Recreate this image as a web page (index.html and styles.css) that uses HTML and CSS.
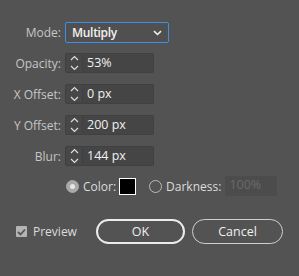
FILE: index.html
```html
<!DOCTYPE html>
<html>
<head>
    <title>Drop Shadow</title>
    <link rel="stylesheet" href="styles.css">
</head>
<body>
    <div class="dialog">
        <div class="form">
            <label class="label">Mode:</label>
            <div class="select">
                <span>Multiply</span>
                <svg width="9" height="6" viewBox="0 0 9 6"><path d="M1 1.2 L4.5 4.5 L8 1.2" fill="none" stroke="#eee" stroke-width="1.6"/></svg>
            </div>

            <label class="label">Opacity:</label>
            <div class="field">
                <div class="stepper">
                    <svg width="9" height="16" viewBox="0 0 9 16"><path d="M1 5 L4.5 1.5 L8 5 M1 11 L4.5 14.5 L8 11" fill="none" stroke="#ddd" stroke-width="1.2"/></svg>
                </div>
                <div class="value">53%</div>
            </div>

            <label class="label">X Offset:</label>
            <div class="field">
                <div class="stepper">
                    <svg width="9" height="16" viewBox="0 0 9 16"><path d="M1 5 L4.5 1.5 L8 5 M1 11 L4.5 14.5 L8 11" fill="none" stroke="#ddd" stroke-width="1.2"/></svg>
                </div>
                <div class="value">0 px</div>
            </div>

            <label class="label">Y Offset:</label>
            <div class="field">
                <div class="stepper">
                    <svg width="9" height="16" viewBox="0 0 9 16"><path d="M1 5 L4.5 1.5 L8 5 M1 11 L4.5 14.5 L8 11" fill="none" stroke="#ddd" stroke-width="1.2"/></svg>
                </div>
                <div class="value">200 px</div>
            </div>

            <label class="label">Blur:</label>
            <div class="field">
                <div class="stepper">
                    <svg width="9" height="16" viewBox="0 0 9 16"><path d="M1 5 L4.5 1.5 L8 5 M1 11 L4.5 14.5 L8 11" fill="none" stroke="#ddd" stroke-width="1.2"/></svg>
                </div>
                <div class="value">144 px</div>
            </div>
        </div>

        <div class="color-row">
            <span class="radio checked"></span>
            <span class="text">Color:</span>
            <span class="swatch"></span>
            <span class="radio"></span>
            <span class="text">Darkness:</span>
            <div class="value disabled">100%</div>
        </div>

        <div class="footer">
            <div class="preview">
                <span class="checkbox">
                    <svg width="9" height="8" viewBox="0 0 9 8"><path d="M1 4 L3.5 6.5 L8 1.5" fill="none" stroke="#555" stroke-width="1.8"/></svg>
                </span>
                <span class="text">Preview</span>
            </div>
            <button class="btn primary">OK</button>
            <button class="btn">Cancel</button>
        </div>
    </div>
</body>
</html>
```

FILE: styles.css
```css
body {
    margin: 0;
    background-color: #535353;
    font-family: 'Open Sans', 'Liberation Sans', sans-serif;
    font-size: 12px;
    color: #d0d0d0;
}

.dialog {
    width: 299px;
    height: 276px;
    box-sizing: border-box;
    padding-top: 22px;
    display: flex;
    flex-direction: column;
}

.form {
    display: grid;
    grid-template-columns: 61px auto;
    column-gap: 4px;
    row-gap: 11px;
    align-items: center;
    justify-items: start;
}

.form .select {
    margin-bottom: -1px;
}

.label {
    justify-self: end;
    color: #c6c6c6;
}

.select {
    width: 104px;
    height: 21px;
    box-sizing: border-box;
    border: 1px solid #3c8ee8;
    border-radius: 2px;
    background-color: #505050;
    display: flex;
    align-items: center;
    justify-content: space-between;
    padding: 0 6px 0 6px;
    color: #f2f2f2;
    font-weight: 600;
    font-size: 12px;
    letter-spacing: -0.3px;
}

.field {
    display: flex;
    height: 20px;
}

.stepper {
    width: 18px;
    height: 20px;
    box-sizing: border-box;
    border: 1px solid #404040;
    border-radius: 2px 0 0 2px;
    background-color: #474747;
    display: flex;
    align-items: center;
    justify-content: center;
}

.value {
    width: 71px;
    height: 20px;
    box-sizing: border-box;
    border: 1px solid #404040;
    border-left: none;
    border-radius: 0 2px 2px 0;
    background-color: #454545;
    color: #f0f0f0;
    padding-left: 4px;
    line-height: 18px;
    font-size: 12.5px;
}

.color-row {
    display: flex;
    align-items: center;
    margin-top: 10px;
    padding-left: 66px;
    height: 20px;
}

.radio {
    width: 13px;
    height: 13px;
    box-sizing: border-box;
    border: 1px solid #bdbdbd;
    border-radius: 50%;
    margin-right: 4px;
}

.radio.checked {
    background-color: #a9a9a9;
    border-color: #a9a9a9;
    position: relative;
}

.radio.checked::after {
    content: '';
    position: absolute;
    left: 3px;
    top: 3px;
    width: 5px;
    height: 5px;
    border-radius: 50%;
    background-color: #e6e6e6;
}

.text {
    color: #dcdcdc;
}

.swatch {
    width: 17px;
    height: 17px;
    box-sizing: border-box;
    border: 1px solid #fff;
    background-color: #000;
    margin-left: 3px;
    margin-right: 13px;
}

.value.disabled {
    width: 52px;
    border: none;
    border-radius: 1px;
    background-color: #4c4c4c;
    color: #6a6a6a;
    margin-left: 4px;
}

.footer {
    display: flex;
    align-items: center;
    margin-top: 23px;
    padding-left: 16px;
}

.preview {
    display: flex;
    align-items: center;
    width: 80px;
}

.checkbox {
    width: 11px;
    height: 11px;
    border-radius: 1px;
    background-color: #b4b4b4;
    display: flex;
    align-items: center;
    justify-content: center;
    margin-right: 6px;
}

.btn {
    height: 25px;
    box-sizing: border-box;
    border-radius: 13px;
    background: transparent;
    font-family: inherit;
    font-size: 12.5px;
    color: #f0f0f0;
    padding: 0;
    cursor: pointer;
}

.btn.primary {
    width: 89px;
    border: 2px solid #ececec;
    margin-right: 7px;
}

.btn:not(.primary) {
    width: 91px;
    border: 1px solid #cfcfcf;
}
```
